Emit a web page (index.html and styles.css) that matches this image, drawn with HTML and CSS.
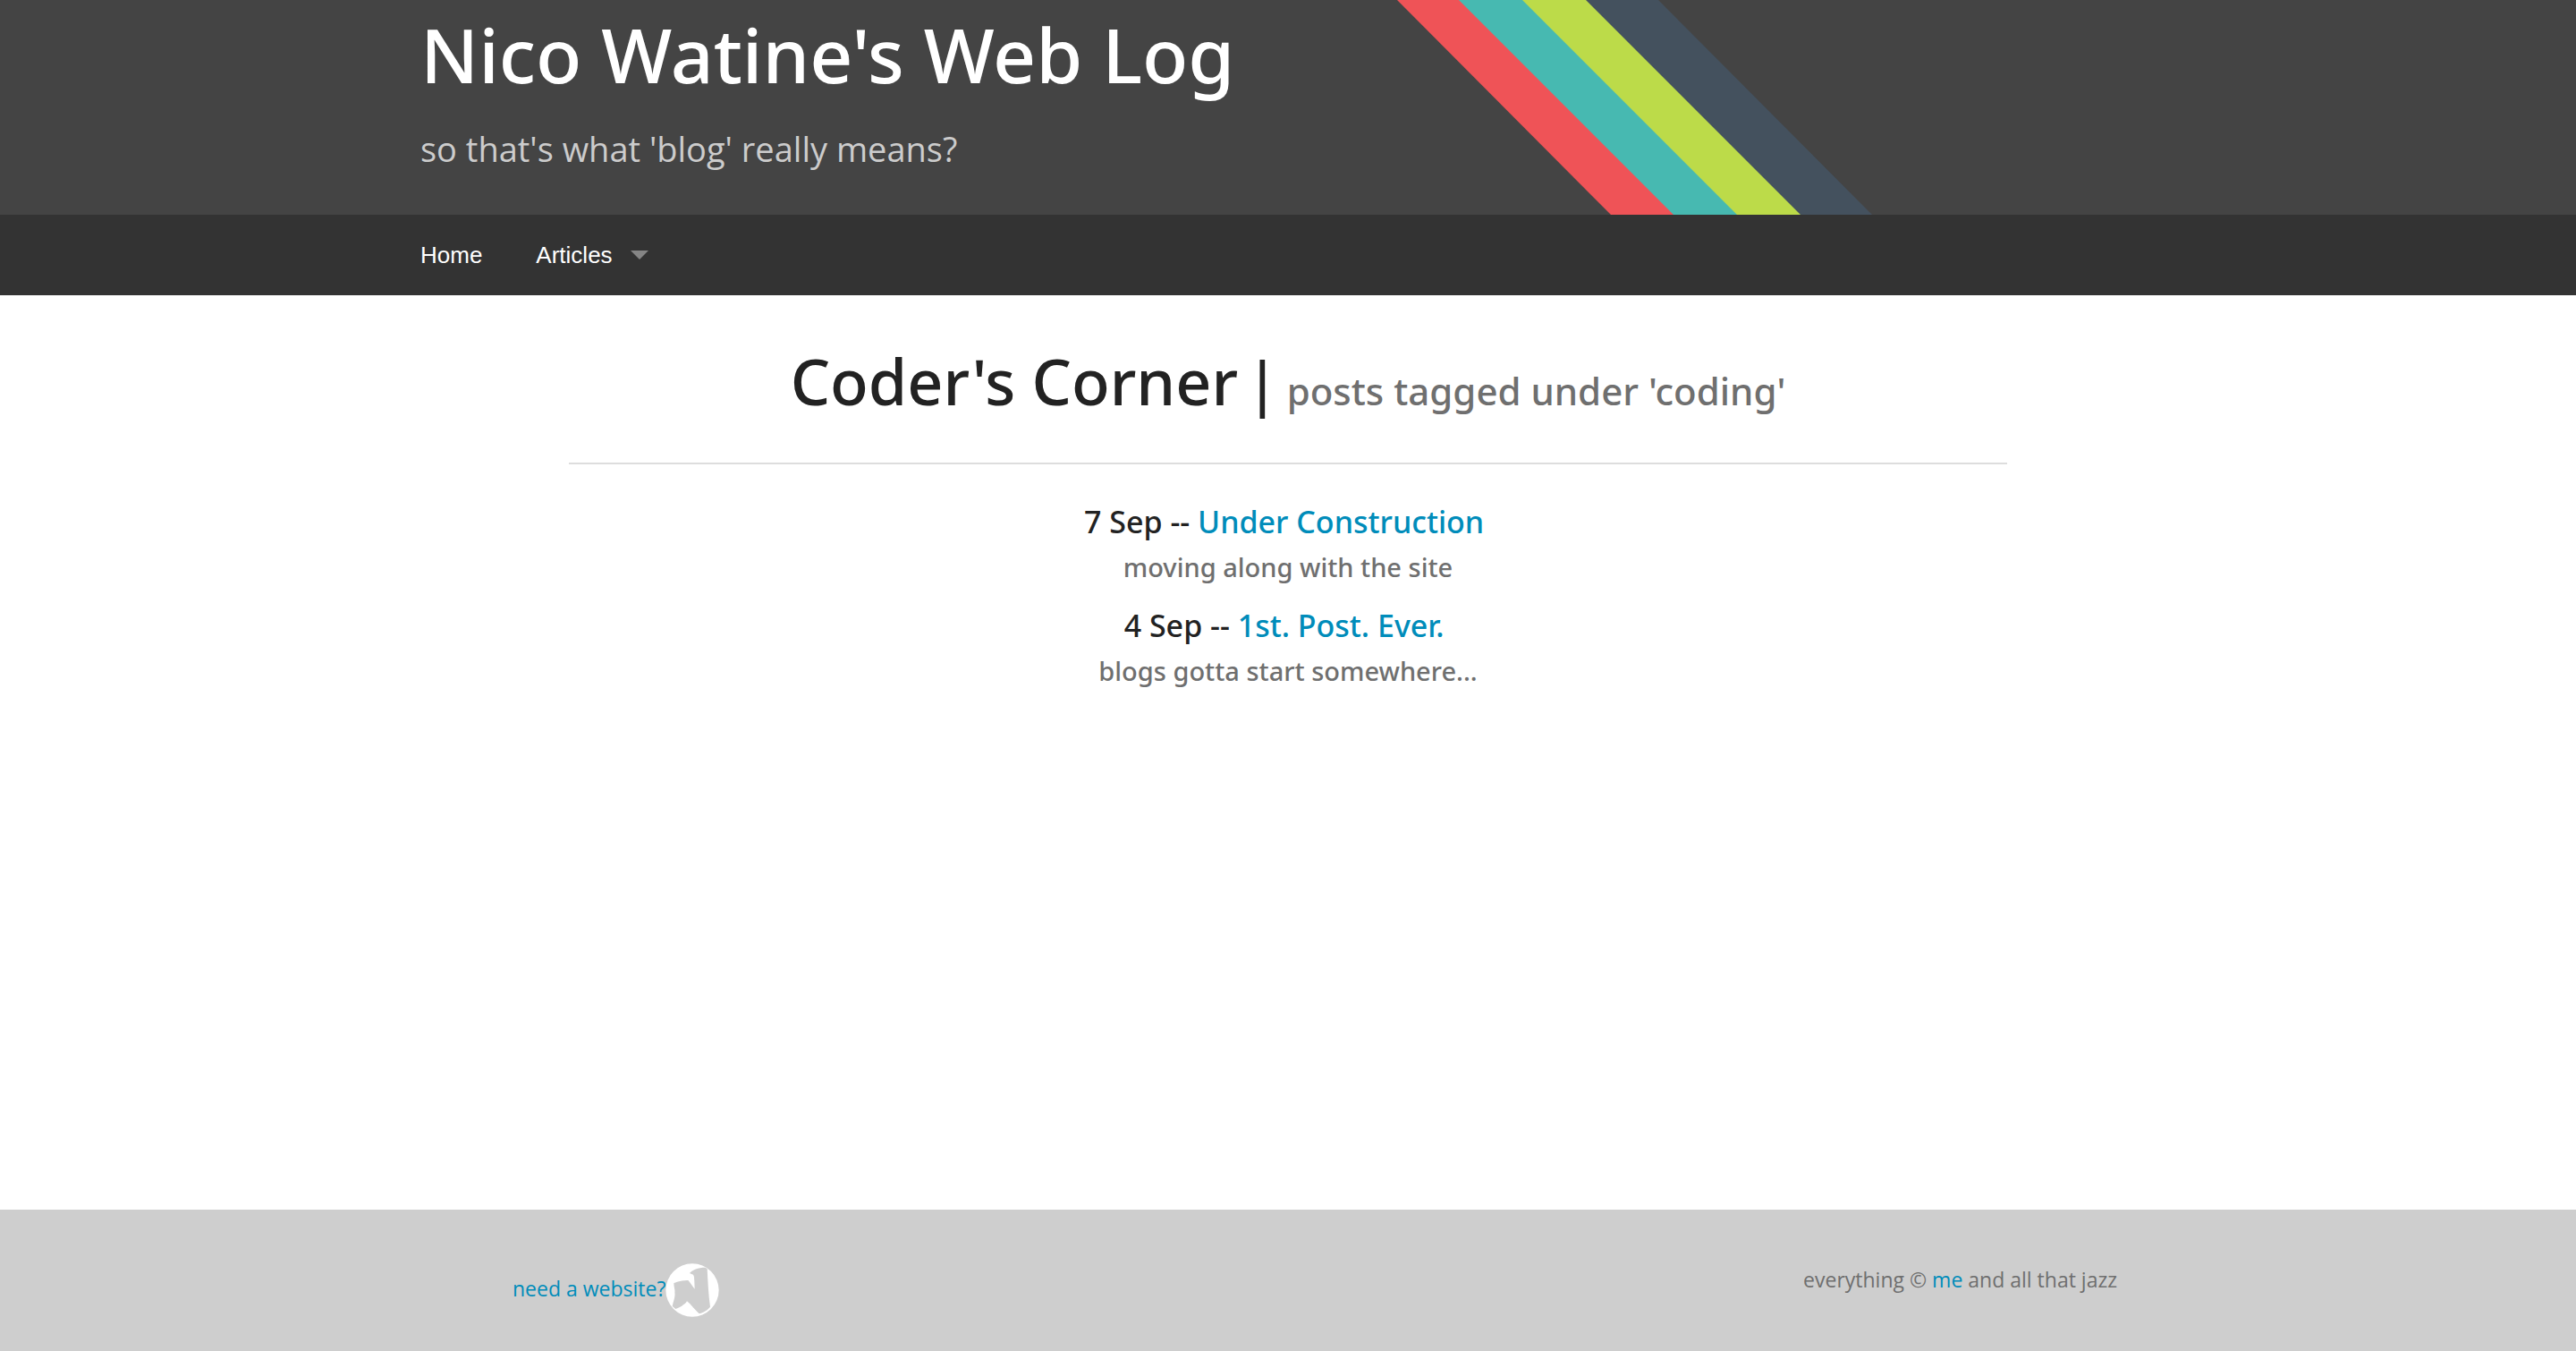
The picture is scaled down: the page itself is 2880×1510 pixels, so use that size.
FILE: index.html
```html
<!DOCTYPE html>
<html lang="en">
<head>
<meta charset="utf-8">
<title>Nico Watine's Web Log</title>
<meta name="viewport" content="width=device-width, initial-scale=1">
<link rel="stylesheet" href="styles.css">
</head>
<body>
<header class="masthead">
  <div class="row masthead-row">
    <div class="brand">
      <h1 class="site-title">Nico Watine's Web Log</h1>
      <p class="tagline">so that's what 'blog' really means?</p>
    </div>
    <svg class="stripes" width="532" height="240" viewBox="-1 0 532 240" aria-hidden="true">
      <path fill="#ef5357" d="M0 0H70L310 240H239Z"/>
      <path fill="#47b9b1" d="M69 0H141L381 240H309Z"/>
      <path fill="#bcdb49" d="M140 0H212L452 240H380Z"/>
      <path fill="#44515e" d="M211 0H292L531 240H451Z"/>
    </svg>
  </div>
</header>
<nav class="topbar" aria-label="Main">
  <ul class="row menu">
    <li><a class="menu-link" href="#">Home</a></li>
    <li><a class="menu-link has-dropdown" href="#">Articles</a></li>
  </ul>
</nav>
<main class="content">
  <h2 class="page-title">Coder's Corner <span class="divider">|</span> <small class="subtitle">posts tagged under 'coding'</small></h2>
  <ul class="posts">
    <li class="post">
      <h3 class="post-title">7 Sep -- <a href="#">Under Construction</a>&nbsp;</h3>
      <p class="post-summary">moving along with the site</p>
    </li>
    <li class="post">
      <h3 class="post-title">4 Sep -- <a href="#">1st. Post. Ever.</a>&nbsp;</h3>
      <p class="post-summary">blogs gotta start somewhere...</p>
    </li>
  </ul>
</main>
<footer class="footer">
  <div class="footer-row">
    <a class="hire" href="#"><span class="hire-label">need a website?</span><svg class="logo" width="60" height="60" viewBox="0 0 180 180" aria-hidden="true">
      <path fill="#fff" fill-rule="evenodd" d="M90 1A89 89 0 1 1 90 179A89 89 0 1 1 90 1ZM28 66C36 64 42 60 52 59C62 58 70 56 76 57C84 66 90 76 98 86L97 60C96 50 97 43 93 38L81 33C90 22 110 14 133 14L140 18C142 60 144 104 150 146C142 155 126 168 112 168C98 156 86 138 72 127C69 136 46 148 34 153L23 144C26 128 34 112 31 98C33 90 28 80 28 66Z"/>
    </svg></a>
    <p class="rights">everything © <a href="#">me</a> and all that jazz</p>
  </div>
</footer>
</body>
</html>
```
FILE: styles.css
```css
* {
  box-sizing: border-box;
}

body {
  display: flex;
  flex-direction: column;
  min-height: 100vh;
  margin: 0;
  background: #fff;
  color: #222;
  font-family: "Noto Sans", "Open Sans", sans-serif;
}

h1, h2, h3, p, ul {
  margin: 0;
  padding: 0;
  font-weight: 500;
}

ul {
  list-style: none;
}

a {
  color: #008cba;
  text-decoration: none;
}

.row {
  width: 100%;
  max-width: 2000px;
  margin: 0 auto;
  padding: 0 30px;
}

.masthead {
  background: #444;
}

.masthead-row {
  display: grid;
  grid-template-columns: 9fr 7fr;
}

.site-title {
  color: #fff;
  font-size: 84px;
  line-height: 122px;
  white-space: nowrap;
}

.tagline {
  padding-top: 14px;
  color: #ccc;
  font-family: "Open Sans", sans-serif;
  font-size: 38px;
  line-height: 60px;
}

.stripes {
  display: block;
}

.topbar {
  background: #333;
}

.menu {
  display: flex;
  gap: 60px;
}

.menu-link {
  display: flex;
  align-items: center;
  gap: 20px;
  color: #fff;
  font: 26px/90px "Liberation Sans", Arial, sans-serif;
}

.has-dropdown::after {
  content: "";
  border: 10px solid transparent;
  border-top-color: #858585;
  border-bottom-width: 0;
}

.content {
  flex: 1;
  width: 100%;
  max-width: 1608px;
  margin: 0 auto;
  padding-top: 46px;
  text-align: center;
}

.page-title {
  padding-bottom: 30px;
  border-bottom: 2px solid #ddd;
  font-size: 70px;
  line-height: 100px;
}

.divider {
  font-family: "Liberation Sans", Arial, sans-serif;
}

.subtitle {
  color: #6f6f6f;
  font-size: 42px;
}

.posts {
  padding-top: 38px;
}

.post {
  padding-bottom: 14px;
}

.post-title {
  font-size: 34px;
  line-height: 52px;
}

.post-summary {
  color: #6f6f6f;
  font-size: 29px;
  line-height: 50px;
}

.footer {
  min-height: 158px;
  background: #cecece;
}

.footer-row {
  display: flex;
  justify-content: space-between;
  align-items: flex-start;
  width: 100%;
  max-width: 1854px;
  margin: 0 auto;
  padding-top: 60px;
  color: #6f6f6f;
  font: 500 23px/36px "Open Sans", sans-serif;
}

.hire {
  display: flex;
  align-items: center;
  padding-left: 60px;
}

.hire-label {
  padding-bottom: 4px;
}
```
